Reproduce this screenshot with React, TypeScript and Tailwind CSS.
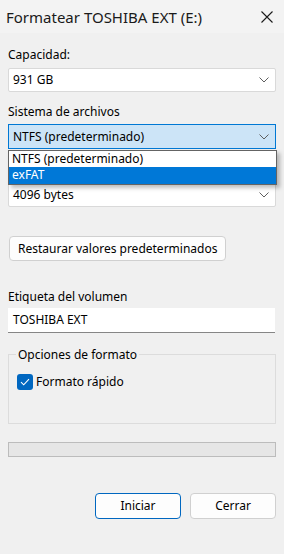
import React from 'react';

const Chevron = () => (
  <svg width="10" height="6" viewBox="0 0 10 6" className="shrink-0">
    <path d="M0.5 0.5 L5 5 L9.5 0.5" fill="none" stroke="#5f5f5f" strokeWidth="1" />
  </svg>
);

function Combo({ value, focused }: { value: string; focused?: boolean }) {
  return (
    <div
      className={
        focused
          ? 'flex h-[25px] items-center justify-between border border-[#0078d4] bg-[#cce4f7] pr-[6px] pl-[4px]'
          : 'flex h-[24px] items-center justify-between rounded-[2px] border border-[#d9d9d9] bg-white pr-[6px] pl-[4px]'
      }
    >
      <span className="text-[12px] leading-4 text-black">{value}</span>
      <Chevron />
    </div>
  );
}

export default function App() {
  return (
    <div
      className="flex h-[554px] w-[284px] flex-col bg-[#f0f0f0] text-[12px] text-black"
      style={{ fontFamily: '"Segoe UI", "Noto Sans", sans-serif' }}
    >
      {/* barra de título */}
      <div className="flex h-[33px] shrink-0 items-center justify-between bg-[#f3f3f3] pr-[11px] pl-[6px]">
        <span className="text-[15px] leading-5 text-[#1a1a1a]">Formatear TOSHIBA EXT (E:)</span>
        <svg width="12" height="12" viewBox="0 0 12 12">
          <path d="M0.5 0.5 L11.5 11.5 M11.5 0.5 L0.5 11.5" stroke="#1a1a1a" strokeWidth="1.1" />
        </svg>
      </div>

      <div className="flex flex-col px-[8px]">
        <p className="mt-[14px] leading-4">Capacidad:</p>
        <div className="mt-[5px]">
          <Combo value="931 GB" />
        </div>

        <p className="mt-[12px] leading-4">Sistema de archivos</p>
        <div className="relative mt-[4px]">
          <Combo value="NTFS (predeterminado)" focused />
          {/* lista desplegada */}
          <div className="absolute top-[26px] right-[-1px] left-0 z-10 flex flex-col border border-[#646464] bg-white shadow-[3px_3px_4px_rgba(0,0,0,0.25)]">
            <div className="h-[16px] pl-[3px] leading-4">NTFS (predeterminado)</div>
            <div className="h-[17px] bg-[#0078d7] pl-[3px] leading-4 text-white">exFAT</div>
          </div>
        </div>

        {/* etiqueta tapada por la lista */}
        <div className="mt-[13px] h-[16px]" />
        <div className="mt-[5px]">
          <Combo value="4096 bytes" />
        </div>

        <div className="mt-[29px] flex">
          <button className="ml-[1px] h-[25px] rounded-[4px] border border-[#d0d0d0] bg-[#fdfdfd] px-[8px] leading-4">
            Restaurar valores predeterminados
          </button>
        </div>

        <p className="mt-[28px] leading-4">Etiqueta del volumen</p>
        <div className="mt-[3px] mr-[1px] flex h-[25px] items-center border-b border-[#868686] bg-white pl-[5px]">
          <span className="leading-4">TOSHIBA EXT</span>
        </div>

        {/* opciones de formato */}
        <div className="relative mt-[21px] h-[70px] border border-[#dcdcdc]">
          <span className="absolute top-[-8px] left-[7px] bg-[#f0f0f0] px-[2px] leading-4">Opciones de formato</span>
          <div className="mt-[19px] ml-[8px] flex items-center gap-[3px]">
            <div className="flex h-[16px] w-[16px] items-center justify-center rounded-[3px] bg-[#0067c0]">
              <svg width="10" height="8" viewBox="0 0 10 8">
                <path d="M1 4.2 L3.7 6.8 L9 1.2" fill="none" stroke="white" strokeWidth="1.1" />
              </svg>
            </div>
            <span className="leading-4">Formato rápido</span>
          </div>
        </div>

        <div className="mt-[18px] h-[15px] border border-[#bcbcbc] bg-[#e6e6e6]" />

        <div className="mt-[36px] flex justify-end gap-[9px]">
          <button className="h-[26px] w-[86px] rounded-[4px] border border-[#0067c0] bg-[#fdfdfd] leading-4">
            Iniciar
          </button>
          <button className="h-[26px] w-[86px] rounded-[4px] border border-[#d0d0d0] bg-[#fdfdfd] leading-4">
            Cerrar
          </button>
        </div>
      </div>
    </div>
  );
}
